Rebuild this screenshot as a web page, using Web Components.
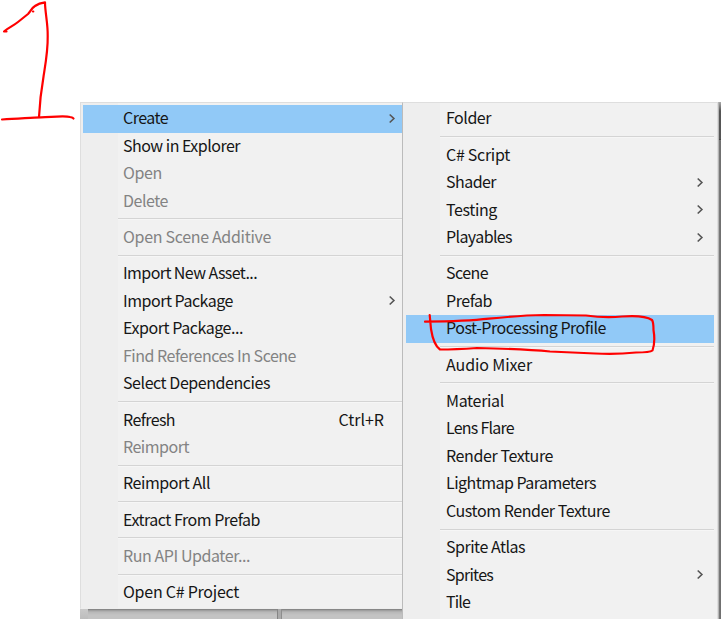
<!DOCTYPE html>
<html lang="en">
<head>
<meta charset="utf-8">
<title>Assets menu</title>
<style>
html, body { margin: 0; width: 721px; height: 619px; overflow: hidden; background: #fff; }
</style>
</head>
<body>
<asset-menus></asset-menus>
<script>
class MenuItem extends HTMLElement {
  connectedCallback() {
    const root = this.attachShadow({ mode: 'open' });
    const key = this.getAttribute('shortcut');
    root.innerHTML = `<style>
      :host { display: flex; align-items: center; box-sizing: border-box; height: 27.53px; flex: none;
        margin-left: var(--item-inset, 3px); padding-left: 40px; color: #161616; white-space: nowrap; }
      :host([disabled]) { color: #838383; }
      :host([active]) { background: #91c9f7; }
      .label { flex: none; line-height: 25px; padding-bottom: 2px; }
      .key { margin-left: auto; margin-right: 18px; line-height: 25px; padding-bottom: 2px; }
      svg { margin-left: auto; margin-right: var(--arrow-gap, 6px); flex: none; }
    </style><span class="label"><slot></slot></span>` +
    (key ? `<span class="key">${key}</span>` : '') +
    (this.hasAttribute('submenu') ? `<svg width="8" height="12" viewBox="0 0 8 12"><path d="M1.7 1.5 5.9 5.5 1.7 9.5" fill="none" stroke="#555" stroke-width="1.6"/></svg>` : '');
    this.fit(root.querySelector('.label'), +this.getAttribute('w') - 1, this.textContent.length);
    if (key) this.fit(root.querySelector('.key'), 45.5, key.length);
  }
  /* Spread the letters so that a label takes its set width. */
  fit(el, width, count) {
    if (width) el.style.letterSpacing = (width - el.getBoundingClientRect().width) / count + 'px';
  }
}
class MenuLine extends HTMLElement {
  connectedCallback() {
    this.attachShadow({ mode: 'open' }).innerHTML = `<style>
      :host { display: flex; align-items: center; flex: none; height: 8.75px; padding-left: var(--line-inset, 37px); }
      i { flex: 1; height: 1px; background: #d4d4d4; border-bottom: 1px solid #f6f6f6; }
    </style><i></i>`;
  }
}
class MenuPanel extends HTMLElement {
  connectedCallback() {
    this.attachShadow({ mode: 'open' }).innerHTML = `<style>
      :host { display: flex; flex-direction: column; box-sizing: border-box; padding-top: 2px;
        border: 1px solid #dedede;
        background: linear-gradient(90deg, #eeeeee 37px, #f1f1f1 37px); }
    </style><slot></slot>`;
  }
}
class PenMarks extends HTMLElement {
  connectedCallback() {
    this.attachShadow({ mode: 'open' }).innerHTML = `<style>
      :host { position: absolute; inset: 0; pointer-events: none; }
      svg { display: block; }
    </style><svg width="721" height="619" fill="none" stroke="#ff0000" stroke-width="2.2" stroke-linecap="round" stroke-linejoin="round">
      <path d="M4 31.500H6.500M4.500 31C9 27.500 13 26 18 22Q23 18 28 14C31 11 31 8.500 35 6Q39 3 45 2.300C45 12 48 24 47.700 36C48 50 46 61 43.600 76Q40 97 39 117M33 11.500h.3"/>
      <path d="M2 119.500C18 119 31 117.500 41 117.300C52 117 65 115.500 70 117Q73 117.500 73.500 118.500"/>
      <path d="M425 321.700C445 321.500 469 321 489 318.700Q520 315.400 544 315L586 315.500Q605 318.200 622 316.500C635 315.500 646 316 652 320Q653.500 322 653.500 330Q655.500 342 652.500 350.500Q650 352.500 636 352.500Q615 354.800 595 353.500L550 351.500C530 349.500 510 348.700 477 348Q455 349.500 440 349.500Q433.500 345 431 329L429.700 315"/>
    </svg>`;
  }
}
class AssetMenus extends HTMLElement {
  connectedCallback() {
    this.attachShadow({ mode: 'open' }).innerHTML = `<style>
      :host { display: block; position: relative; width: 721px; height: 619px; overflow: hidden;
        font: 16px "Noto Sans CJK TC", "Noto Sans", sans-serif; }
      .stage { display: flex; align-items: flex-start; padding: 102px 0 0 80px; height: 517px; }
      .left { flex: none; width: 322px; }
      .first { height: 507px; border-right: 0; border-bottom-color: #eee; --item-inset: 2px; }
      .window { display: flex; height: 10px; background: linear-gradient(#777 0, #979797 1px, #b7b7b7 3px, #c3c3c3 6px); }
      .corner { width: 8px; background: linear-gradient(#c9c9c9, #bdbdbd); }
      .split { margin-left: 189px; width: 3px; border-left: 1px solid #858585; border-right: 1px solid #8d8d8d; background: #aaa; }
      .second { flex: none; width: 315px; height: 530px; border-left-color: #bbb; border-right: 0; --arrow-gap: 10px; }
      .second > menu-item, .second > menu-line { margin-right: 3px; }
      .edge { flex: none; width: 4px; height: 517px; background: linear-gradient(90deg, #dedede 0 1px, #b5b5b5 1px 2px, #777 2px 3px, #707070 3px); }
      .cap { margin-left: 2px; height: 39px; background: linear-gradient(#aaa, #555 9px, #555 37px, #444 37px 38px, #777 38px); }
    </style>
    <div class="stage">
      <div class="left">
        <menu-panel class="first">
          <menu-item active submenu w="46">Create</menu-item>
          <menu-item w="118">Show in Explorer</menu-item>
          <menu-item disabled w="40">Open</menu-item>
          <menu-item disabled w="46">Delete</menu-item>
          <menu-line></menu-line>
          <menu-item disabled w="149">Open Scene Additive</menu-item>
          <menu-line></menu-line>
          <menu-item w="135">Import New Asset...</menu-item>
          <menu-item submenu w="111">Import Package</menu-item>
          <menu-item w="121">Export Package...</menu-item>
          <menu-item disabled w="174">Find References In Scene</menu-item>
          <menu-item w="148">Select Dependencies</menu-item>
          <menu-line></menu-line>
          <menu-item shortcut="Ctrl+R" w="53">Refresh</menu-item>
          <menu-item disabled w="67">Reimport</menu-item>
          <menu-line></menu-line>
          <menu-item w="88">Reimport All</menu-item>
          <menu-line></menu-line>
          <menu-item w="138">Extract From Prefab</menu-item>
          <menu-line></menu-line>
          <menu-item disabled w="128">Run API Updater...</menu-item>
          <menu-line></menu-line>
          <menu-item w="117">Open C# Project</menu-item>
        </menu-panel>
        <div class="window"><div class="corner"></div><div class="split"></div></div>
      </div>
      <menu-panel class="second">
        <menu-item w="46">Folder</menu-item>
        <menu-line></menu-line>
        <menu-item w="65">C# Script</menu-item>
        <menu-item submenu w="51">Shader</menu-item>
        <menu-item submenu w="52">Testing</menu-item>
        <menu-item submenu w="67">Playables</menu-item>
        <menu-line></menu-line>
        <menu-item w="43">Scene</menu-item>
        <menu-item w="47">Prefab</menu-item>
        <menu-item active w="161">Post-Processing Profile</menu-item>
        <menu-line></menu-line>
        <menu-item w="87">Audio Mixer</menu-item>
        <menu-line></menu-line>
        <menu-item w="59">Material</menu-item>
        <menu-item w="69">Lens Flare</menu-item>
        <menu-item w="108">Render Texture</menu-item>
        <menu-item w="151">Lightmap Parameters</menu-item>
        <menu-item w="165">Custom Render Texture</menu-item>
        <menu-line></menu-line>
        <menu-item w="80">Sprite Atlas</menu-item>
        <menu-item submenu w="48">Sprites</menu-item>
        <menu-item w="25">Tile</menu-item>
      </menu-panel>
      <div class="edge"><div class="cap"></div></div>
    </div>
    <pen-marks></pen-marks>`;
  }
}
customElements.define('menu-item', MenuItem);
customElements.define('menu-line', MenuLine);
customElements.define('menu-panel', MenuPanel);
customElements.define('pen-marks', PenMarks);
customElements.define('asset-menus', AssetMenus);
</script>
</body>
</html>
